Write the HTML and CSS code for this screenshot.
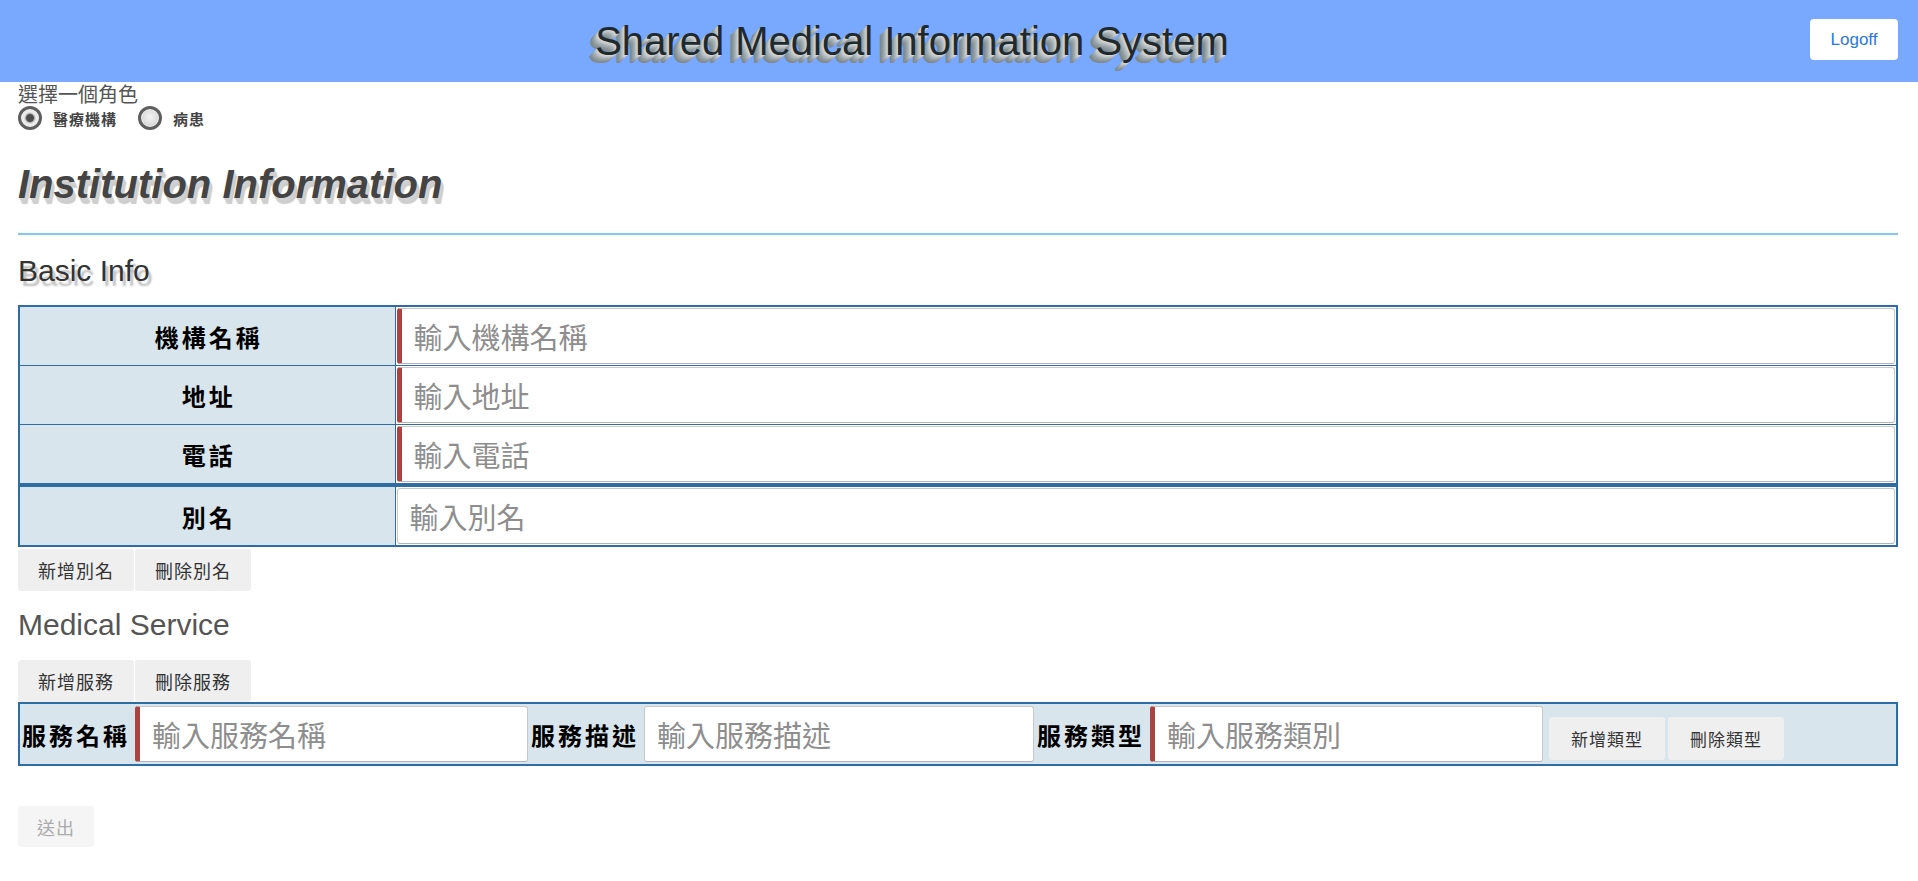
FILE: index.html
```html
<!DOCTYPE html>
<html lang="zh-Hant">
<head>
<meta charset="utf-8">
<title>Shared Medical Information System</title>
<link rel="stylesheet" href="styles.css">
</head>
<body>
<header class="topbar">
  <div class="brand">Shared Medical Information System</div>
  <button class="logoff">Logoff</button>
</header>
<main class="page">
  <div class="role">
    <div class="role-title">選擇一個角色</div>
    <div class="role-options">
      <label class="role-option"><input type="radio" name="role" checked><span>醫療機構</span></label>
      <label class="role-option"><input type="radio" name="role"><span>病患</span></label>
    </div>
  </div>
  <h1 class="page-title">Institution Information</h1>
  <hr class="divider">
  <h2 class="section-title basic">Basic Info</h2>
  <table class="info-table">
    <tr><td class="label">機構名稱</td><td class="field req"><input type="text" placeholder="輸入機構名稱"></td></tr>
    <tr><td class="label">地址</td><td class="field req"><input type="text" placeholder="輸入地址"></td></tr>
    <tr><td class="label">電話</td><td class="field req"><input type="text" placeholder="輸入電話"></td></tr>
  </table>
  <table class="info-table">
    <tr><td class="label">別名</td><td class="field"><input type="text" placeholder="輸入別名"></td></tr>
  </table>
  <div class="btn-group">
    <button class="btn">新增別名</button>
    <button class="btn">刪除別名</button>
  </div>
  <h2 class="section-title service">Medical Service</h2>
  <div class="btn-group service-btns">
    <button class="btn">新增服務</button>
    <button class="btn">刪除服務</button>
  </div>
  <div class="service-row">
    <div class="svc-label">服務名稱</div>
    <div class="svc-field req w393"><input type="text" placeholder="輸入服務名稱"></div>
    <div class="svc-label">服務描述</div>
    <div class="svc-field w390"><input type="text" placeholder="輸入服務描述"></div>
    <div class="svc-label">服務類型</div>
    <div class="svc-field req w393"><input type="text" placeholder="輸入服務類別"></div>
    <div class="svc-btns">
      <button class="btn small">新增類型</button>
      <button class="btn small">刪除類型</button>
    </div>
  </div>
  <button class="btn submit" disabled>送出</button>
</main>
</body>
</html>
```

FILE: styles.css
```css
* { box-sizing: border-box; }

body {
  margin: 0;
  background: #ffffff;
  font-family: "Liberation Sans", "Noto Sans CJK TC", sans-serif;
  color: #333;
}

/* ---------- header ---------- */
.topbar {
  height: 82px;
  background: #78a8ff;
  display: flex;
  align-items: center;
}

.brand {
  flex: 1;
  text-align: center;
  padding-left: 14px;
  padding-bottom: 0;
  font-size: 40px;
  line-height: 46px;
  color: #1f2a2e;
  text-shadow:
    -1px 1px 0 #d0d5d7,
    -2px 2px 0 #c3c9cb,
    -3px 3px 0 #b4bbbe,
    -4px 4px 0 #a6aeb1,
    -5px 5px 0 #99a2a6,
    -6px 6px 0 #8e989c,
    -7px 7px 0 #868f93,
    -8px 8px 0 #7f898d;
}

.logoff {
  width: 88px;
  height: 41px;
  margin-right: 20px;
  margin-bottom: 3px;
  border: none;
  border-radius: 4px;
  background: #ffffff;
  color: #2a77de;
  font-family: "Liberation Sans", sans-serif;
  font-size: 17px;
}

/* ---------- page ---------- */
.page {
  padding: 0 20px 40px 18px;
}

.role-title {
  font-family: "Noto Sans CJK TC", sans-serif;
  font-size: 20px;
  line-height: 24px;
  color: #555;
}

.role-options {
  display: flex;
  align-items: center;
  height: 24px;
  margin-top: 0;
}

.role-option {
  display: flex;
  align-items: center;
  margin-right: 21px;
}

.role-option input {
  appearance: none;
  -webkit-appearance: none;
  width: 24px;
  height: 24px;
  margin: 0 11px 0 0;
  border: 3px solid #5e5e5e;
  border-radius: 50%;
  background: radial-gradient(circle at 50% 45%, #f4f4f4 0, #e2e2e2 45%, #bdbdbd 100%);
  box-shadow: inset 0 0 0 1px #f2f2f2;
}

.role-option input:checked {
  background: radial-gradient(circle, #4d4d4d 0 3.5px, #9a9a9a 4.2px, #d6d6d6 5.2px, #eeeeee 6.5px, #c4c4c4 100%);
}

.role-option span {
  font-family: "Noto Sans CJK TC", sans-serif;
  font-size: 15px;
  font-weight: 700;
  letter-spacing: 1px;
  color: #444;
}

.page-title {
  margin: 31px 0 0;
  font-size: 40px;
  line-height: 46px;
  font-weight: 700;
  font-style: italic;
  color: #444;
  text-shadow:
    1px 2px 0 #d2d2d2,
    2px 4px 0 #cfcfcf,
    3px 6px 1px #cccccc;
}

.divider {
  margin: 26px 0 0;
  border: 0;
  height: 2px;
  background: #80caeb;
}

.section-title {
  margin: 19px 0 0;
  font-size: 30px;
  line-height: 34px;
  font-weight: 400;
}

.section-title.basic {
  color: #333;
  text-shadow: 3px 5px 2px #bdbdbd;
}

.section-title.service {
  margin-top: 17px;
  color: #555;
}

/* ---------- basic info table ---------- */
.info-table {
  width: 100%;
  border-collapse: collapse;
  border: 2px solid #2e6ca4;
}

.info-table:first-of-type {
  margin-top: 17px;
}

.info-table td {
  border: 1px solid #2e6ca4;
  padding: 1px;
}

.info-table .label {
  width: 376px;
  background: #d8e5ec;
  text-align: center;
  padding-left: 4px;
  font-family: "Noto Sans CJK TC", sans-serif;
  font-size: 24px;
  font-weight: 700;
  letter-spacing: 3px;
  color: #000;
}

input[type="text"] {
  display: block;
  width: 100%;
  height: 56px;
  margin: 0;
  padding: 0 12px;
  border: 1px solid #c9c9c9;
  border-bottom-color: #b4b4b4;
  border-radius: 3px;
  background: #fff;
  font-family: "Noto Sans CJK TC", sans-serif;
  font-size: 29px;
  color: #333;
}

input[type="text"]::placeholder {
  color: #8e8e8e;
}

.req input[type="text"] {
  border-left: 5px solid #a94442;
}

/* ---------- buttons ---------- */
.btn-group {
  display: flex;
  gap: 1px;
  margin-top: 2px;
}

.service-btns {
  margin-top: 18px;
}

.btn {
  height: 42px;
  padding: 0 20px;
  border: none;
  border-radius: 3px;
  background: #efefef;
  font-family: "Noto Sans CJK TC", sans-serif;
  font-size: 18px;
  letter-spacing: 1px;
  color: #333;
}

.btn.small {
  height: 43px;
  width: 116px;
  padding: 0;
  font-size: 17px;
}

.btn.submit {
  display: block;
  margin-top: 40px;
  height: 41px;
  padding: 0 19px;
  background: #f5f5f5;
  color: #ababab;
}

/* ---------- service row ---------- */
.service-row {
  display: flex;
  align-items: center;
  gap: 1px;
  height: 64px;
  padding: 0;
  border: 2px solid #2e6ca4;
  background: #d8e5ec;
}

.svc-label {
  width: 114px;
  padding-left: 2px;
  font-family: "Noto Sans CJK TC", sans-serif;
  font-size: 24px;
  font-weight: 700;
  letter-spacing: 3px;
  color: #000;
  white-space: nowrap;
}

.svc-field.w393 { width: 393px; }
.svc-field.w390 { width: 390px; }

.svc-btns {
  display: flex;
  gap: 3px;
  align-self: flex-end;
  margin: 0 0 4px 5px;
}
```
